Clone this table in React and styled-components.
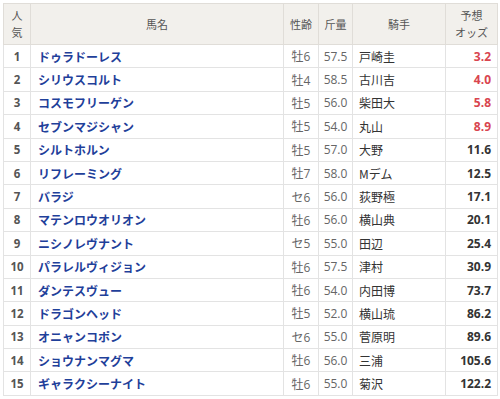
import React from "react";
import styled, { createGlobalStyle } from "styled-components";

const Global = createGlobalStyle`
  html, body { margin: 0; padding: 0; background: #fff; }
  body { font-family: "Noto Sans CJK JP", "Noto Sans", sans-serif; }
`;

const Wrap = styled.div`
  padding: 3px 3px 0 3px;
`;

const Table = styled.table`
  width: 494px;
  border-collapse: collapse;
  table-layout: fixed;
  font-family: "Noto Sans CJK JP", "Noto Sans", sans-serif;
`;

const Th = styled.th`
  background: #f2f0ec;
  color: #555;
  font-size: 11px;
  font-weight: normal;
  line-height: 17px;
  height: 40px;
  padding: 0;
  border: 1px solid #e0ddd8;
  text-align: center;
  vertical-align: middle;
`;

const Td = styled.td`
  height: 22.4px;
  padding: 0 ${(p) => (p.$align ? "6px" : "0")};
  border: 1px solid #e3e3e3;
  text-align: ${(p) => p.$align || "center"};
  vertical-align: middle;
  font-family: "Open Sans", "Noto Sans CJK JP", sans-serif;
  font-size: 12px;
  color: #666;
  white-space: nowrap;
`;

const Rank = styled(Td)`
  font-size: 11.5px;
  font-weight: 700;
  color: #555;
`;

const Name = styled(Td)`
  font-family: "Noto Sans CJK JP", sans-serif;
  font-size: 12px;
  font-weight: bold;
  color: #1f409a;
  padding-left: 7px;
`;

const Jockey = styled(Td)`
  font-family: "Noto Sans CJK JP", sans-serif;
  color: #333;
  font-size: 12px;
  padding-left: 6px;
`;

const Odds = styled(Td)`
  font-weight: 700;
  font-size: 12px;
  color: ${(p) => (p.$hot ? "#d9454f" : "#333")};
  padding-right: 6px;
`;

const rows = [
  [1, "ドゥラドーレス", "牡6", "57.5", "戸崎圭", "3.2"],
  [2, "シリウスコルト", "牡4", "58.5", "古川吉", "4.0"],
  [3, "コスモフリーゲン", "牡5", "56.0", "柴田大", "5.8"],
  [4, "セブンマジシャン", "牡5", "54.0", "丸山", "8.9"],
  [5, "シルトホルン", "牡5", "57.0", "大野", "11.6"],
  [6, "リフレーミング", "牡7", "58.0", "Mデム", "12.5"],
  [7, "バラジ", "セ6", "56.0", "荻野極", "17.1"],
  [8, "マテンロウオリオン", "牡6", "56.0", "横山典", "20.1"],
  [9, "ニシノレヴナント", "セ5", "55.0", "田辺", "25.4"],
  [10, "パラレルヴィジョン", "牡6", "57.5", "津村", "30.9"],
  [11, "ダンテスヴュー", "牡6", "54.0", "内田博", "73.7"],
  [12, "ドラゴンヘッド", "牡5", "52.0", "横山琉", "86.2"],
  [13, "オニャンコポン", "セ6", "55.0", "菅原明", "89.6"],
  [14, "ショウナンマグマ", "牡6", "56.0", "三浦", "105.6"],
  [15, "ギャラクシーナイト", "牡6", "55.0", "菊沢", "122.2"],
];

export default function App() {
  return (
    <Wrap>
      <Global />
      <Table>
        <colgroup>
          <col style={{ width: 27 }} />
          <col style={{ width: 253 }} />
          <col style={{ width: 35 }} />
          <col style={{ width: 34 }} />
          <col style={{ width: 93 }} />
          <col style={{ width: 52 }} />
        </colgroup>
        <thead>
          <tr>
            <Th>人<br />気</Th>
            <Th>馬名</Th>
            <Th>性齢</Th>
            <Th>斤量</Th>
            <Th>騎手</Th>
            <Th>予想<br />オッズ</Th>
          </tr>
        </thead>
        <tbody>
          {rows.map((r) => (
            <tr key={r[0]}>
              <Rank>{r[0]}</Rank>
              <Name $align="left">{r[1]}</Name>
              <Td>{r[2]}</Td>
              <Td>{r[3]}</Td>
              <Jockey $align="left">{r[4]}</Jockey>
              <Odds $align="right" $hot={r[0] <= 4}>{r[5]}</Odds>
            </tr>
          ))}
        </tbody>
      </Table>
    </Wrap>
  );
}
